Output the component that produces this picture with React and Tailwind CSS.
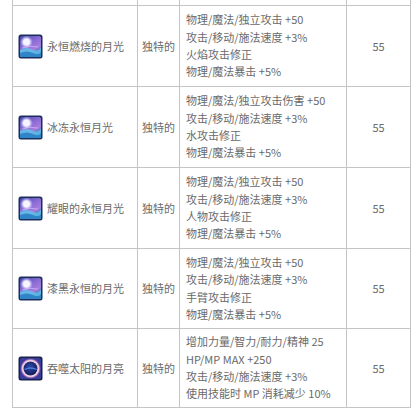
import React from "react";

function MoonIcon({ id }) {
  return (
    <svg width="25" height="25" viewBox="0 0 25 25" className="shrink-0">
      <defs>
        <linearGradient id={`sky${id}`} x1="0" y1="0" x2="0.6" y2="1">
          <stop offset="0" stopColor="#4048a8" />
          <stop offset="0.45" stopColor="#8a6ad4" />
          <stop offset="0.75" stopColor="#a67ede" />
          <stop offset="1" stopColor="#3568b0" />
        </linearGradient>
        <radialGradient id={`moon${id}`} cx="0.5" cy="0.5" r="0.5">
          <stop offset="0" stopColor="#ffffff" />
          <stop offset="0.5" stopColor="#ece8ff" />
          <stop offset="1" stopColor="#c0b0f4" stopOpacity="0" />
        </radialGradient>
      </defs>
      <rect x="0.5" y="0.5" width="24" height="24" rx="2.5" fill="#1c2f5a" />
      <rect x="2" y="2" width="21" height="21" rx="1.5" fill={`url(#sky${id})`} />
      <circle cx="8.5" cy="8" r="6.5" fill={`url(#moon${id})`} />
      <circle cx="8.5" cy="8" r="3" fill="#f6f4ff" />
      <path d="M2 16 Q8 12.5 14 15.5 T23 13.5 L23 23 L2 23 Z" fill="#5cc4e8" opacity="0.8" />
      <path d="M2 19 Q9 16 15 19 T23 18 L23 23 L2 23 Z" fill="#2a80c4" opacity="0.9" />
      <path d="M4 14 Q11 11 20 13" stroke="#e0d0ff" strokeWidth="0.8" fill="none" opacity="0.7" />
    </svg>
  );
}

function EclipseIcon() {
  return (
    <svg width="25" height="25" viewBox="0 0 25 25" className="shrink-0">
      <defs>
        <radialGradient id="eglow" cx="0.5" cy="0.5" r="0.5">
          <stop offset="0.6" stopColor="#ffffff" />
          <stop offset="0.8" stopColor="#f0b8d8" />
          <stop offset="1" stopColor="#6a4ab0" stopOpacity="0" />
        </radialGradient>
        <radialGradient id="ecore" cx="0.45" cy="0.4" r="0.6">
          <stop offset="0" stopColor="#2c4aa8" />
          <stop offset="1" stopColor="#141c58" />
        </radialGradient>
      </defs>
      <rect x="0.5" y="0.5" width="24" height="24" rx="2.5" fill="#17204f" />
      <rect x="2" y="2" width="21" height="21" rx="1.5" fill="#3a3c98" />
      <circle cx="12.5" cy="12.5" r="10.5" fill="url(#eglow)" />
      <circle cx="12.5" cy="12.5" r="7" fill="url(#ecore)" />
      <path d="M6.5 13.5 Q12.5 10.5 18.5 13.5" stroke="#4c7ee0" strokeWidth="1.3" fill="none" />
    </svg>
  );
}

const rows = [
  {
    name: "永恒燃烧的月光",
    icon: "m",
    lines: ["物理/魔法/独立攻击 +50", "攻击/移动/施法速度 +3%", "火焰攻击修正", "物理/魔法暴击 +5%"],
    h: "h-[81px]",
  },
  {
    name: "冰冻永恒月光",
    icon: "m",
    lines: ["物理/魔法/独立攻击伤害 +50", "攻击/移动/施法速度 +3%", "水攻击修正", "物理/魔法暴击 +5%"],
    h: "h-[81px]",
  },
  {
    name: "耀眼的永恒月光",
    icon: "m",
    lines: ["物理/魔法/独立攻击 +50", "攻击/移动/施法速度 +3%", "人物攻击修正", "物理/魔法暴击 +5%"],
    h: "h-[81px]",
  },
  {
    name: "漆黑永恒的月光",
    icon: "m",
    lines: ["物理/魔法/独立攻击 +50", "攻击/移动/施法速度 +3%", "手臂攻击修正", "物理/魔法暴击 +5%"],
    h: "h-[80px]",
  },
  {
    name: "吞噬太阳的月亮",
    icon: "e",
    lines: ["增加力量/智力/耐力/精神 25", "HP/MP MAX +250", "攻击/移动/施法速度 +3%", "使用技能时 MP 消耗减少 10%"],
    h: "h-[80px]",
  },
];

export default function App() {
  return (
    <div
      className="w-[417px] h-[420px] bg-white overflow-hidden text-[11px] text-[#6a6a6a]"
      style={{ fontFamily: '"Noto Sans CJK SC", "Noto Sans", sans-serif' }}
    >
      <div className="ml-[12px] w-[399px]">
        <div className="grid grid-cols-[125px_42px_167px_65px] h-[5px]">
          <div className="border-l border-[#c4c4c4]" />
          <div className="border-l border-[#c4c4c4]" />
          <div className="border-l border-[#c4c4c4]" />
          <div className="border-l border-r border-[#c4c4c4]" />
        </div>
        {rows.map((r, i) => (
          <div
            key={i}
            className={`grid grid-cols-[125px_42px_167px_65px] border-t border-[#c4c4c4] ${r.h} ${
              i === rows.length - 1 ? "border-b" : ""
            }`}
          >
            <div className="border-l border-[#c4c4c4] flex items-center pl-[5px] gap-[4px]">
              {r.icon === "e" ? <EclipseIcon /> : <MoonIcon id={i} />}
              <span className="whitespace-nowrap">{r.name}</span>
            </div>
            <div className="border-l border-[#c4c4c4] flex items-center justify-center whitespace-nowrap">
              独特的
            </div>
            <div className="border-l border-[#c4c4c4] flex flex-col justify-center pl-[6px] leading-[17.3px]">
              {r.lines.map((l, j) => (
                <div key={j} className="whitespace-nowrap">
                  {l}
                </div>
              ))}
            </div>
            <div className="border-l border-r border-[#c4c4c4] flex items-center justify-center">55</div>
          </div>
        ))}
      </div>
    </div>
  );
}
